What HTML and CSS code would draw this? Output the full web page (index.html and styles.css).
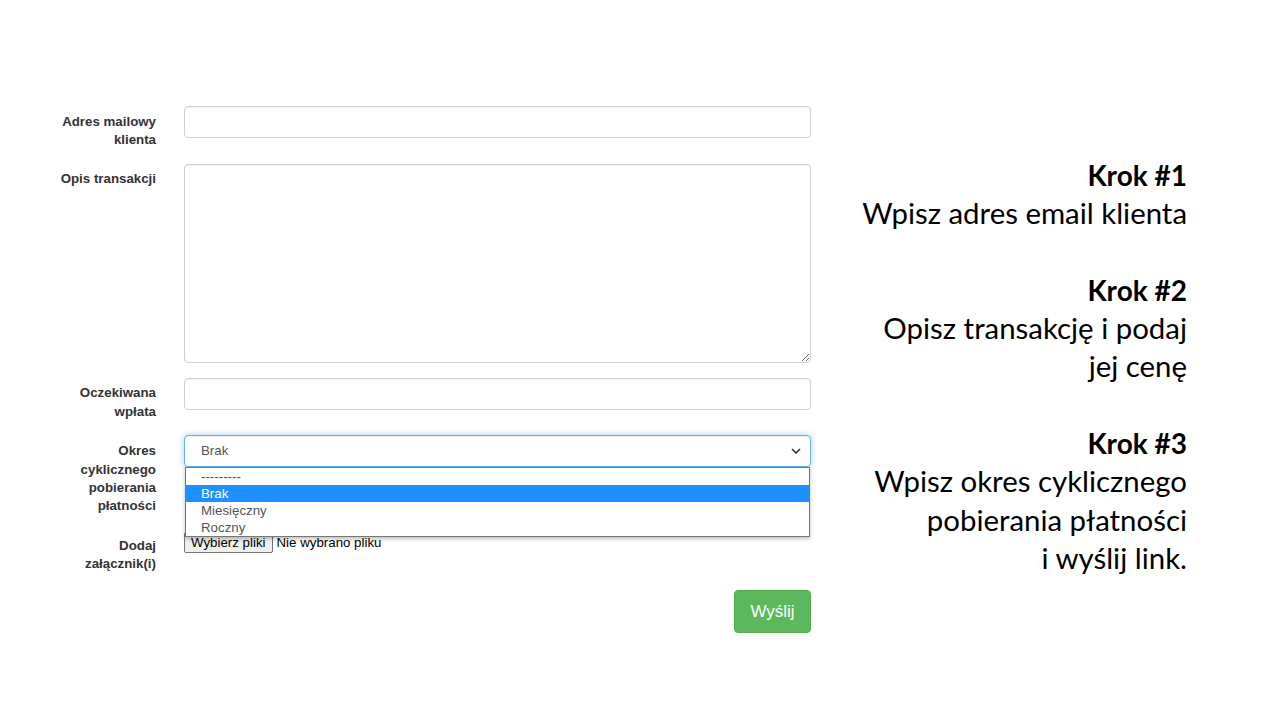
FILE: index.html
```html
<!DOCTYPE html>
<html lang="pl">
<head>
<meta charset="utf-8">
<title>Formularz</title>
<link rel="stylesheet" href="styles.css">
</head>
<body>
<div class="page">
  <form class="form">
    <label class="label">Adres mailowy klienta</label>
    <div class="field"><input class="control" type="text"></div>

    <label class="label">Opis transakcji</label>
    <div class="field"><textarea class="control area"></textarea></div>

    <label class="label">Oczekiwana wpłata</label>
    <div class="field"><input class="control" type="text"></div>

    <label class="label">Okres cyklicznego pobierania płatności</label>
    <div class="field">
      <div class="select">
        <span class="select-value">Brak</span>
        <svg class="chevron" width="10" height="6" viewBox="0 0 10 6"><path d="M1 1l4 4 4-4" fill="none" stroke="#333" stroke-width="1.6"/></svg>
        <ul class="menu">
          <li class="opt">---------</li>
          <li class="opt active">Brak</li>
          <li class="opt">Miesięczny</li>
          <li class="opt">Roczny</li>
        </ul>
      </div>
    </div>

    <label class="label">Dodaj załącznik(i)</label>
    <div class="field">
      <div class="file"><span class="file-btn">Wybierz pliki</span><span class="file-text">Nie wybrano pliku</span></div>
    </div>

    <div></div>
    <div class="actions"><button type="button" class="btn">Wyślij</button></div>
  </form>

  <div class="steps">
    <p class="step"><b>Krok #1</b><br>Wpisz adres email klienta</p>
    <p class="step"><b>Krok #2</b><br>Opisz transakcję i podaj<br>jej cenę</p>
    <p class="step"><b>Krok #3</b><br>Wpisz okres cyklicznego<br>pobierania płatności<br>i wyślij link.</p>
  </div>
</div>
</body>
</html>
```

FILE: styles.css
```css
* { box-sizing: border-box; }
html, body { margin: 0; padding: 0; background: #fff; }
body { width: 1280px; height: 720px; overflow: hidden; }

.page {
  display: flex;
  justify-content: space-between;
  align-items: flex-start;
  padding: 106px 93px 0 60px;
}

.form {
  display: grid;
  grid-template-columns: 96px 627px;
  column-gap: 28px;
  row-gap: 15px;
  font-family: "Liberation Sans", Arial, sans-serif;
  font-size: 13.3px;
  color: #333;
}

.label {
  font-weight: bold;
  text-align: right;
  line-height: 18.2px;
  padding-top: 6.5px;
}

.field { position: relative; }

.control {
  display: block;
  width: 100%;
  height: 32px;
  border: 1px solid #d0d0d0;
  border-radius: 4px;
  background: #fff;
  box-shadow: inset 0 1px 1px rgba(0,0,0,.05);
  font: inherit;
  color: #555;
  padding: 6px 12px;
  margin: 0;
  outline: none;
}
.area { height: 199px; resize: vertical; }

.select {
  position: relative;
  height: 32px;
  margin-top: -1px;
  border: 1px solid #66afe9;
  border-radius: 4px;
  box-shadow: inset 0 1px 1px rgba(0,0,0,.075), 0 0 6px rgba(102,175,233,.6);
  display: flex;
  align-items: center;
  padding: 0 8px 0 16px;
  color: #555;
}
.select-value { flex: 1; }
.chevron { display: block; margin-right: 1px; }

.menu {
  position: absolute;
  top: 31px;
  left: 0;
  right: 0;
  margin: 0;
  padding: 0;
  list-style: none;
  background: #fff;
  border: 1px solid #767676;
  box-shadow: 0 2px 4px rgba(0,0,0,.25);
  z-index: 5;
  font-size: 13.3px;
}
.opt {
  height: 17px;
  line-height: 17px;
  padding-left: 15px;
  color: #555;
}
.opt.active { background: #1e90ff; color: #fff; }

.file { display: flex; align-items: center; margin-top: 2px; }
.file-btn {
  border: 1px solid #767676;
  border-radius: 2px;
  background: #efefef;
  color: #000;
  padding: 2px 6px;
  line-height: 15px;
}
.file-text { margin-left: 4px; color: #000; }

.actions { display: flex; justify-content: flex-end; padding-top: 2px; }
.btn {
  width: 77px;
  height: 43px;
  background: #5cb85c;
  border: 1px solid #4cae4c;
  border-radius: 4px;
  color: #fff;
  font-family: "Liberation Sans", Arial, sans-serif;
  font-size: 17px;
  padding: 0;
}

.steps {
  margin-top: 50px;
  text-align: right;
  font-family: Lato, "Noto Sans", sans-serif;
  font-size: 29.4px;
  line-height: 38.3px;
  color: #000;
}
.step { margin: 0 0 38.3px; }
.step b { font-weight: bold; font-size: 28px; }
```
